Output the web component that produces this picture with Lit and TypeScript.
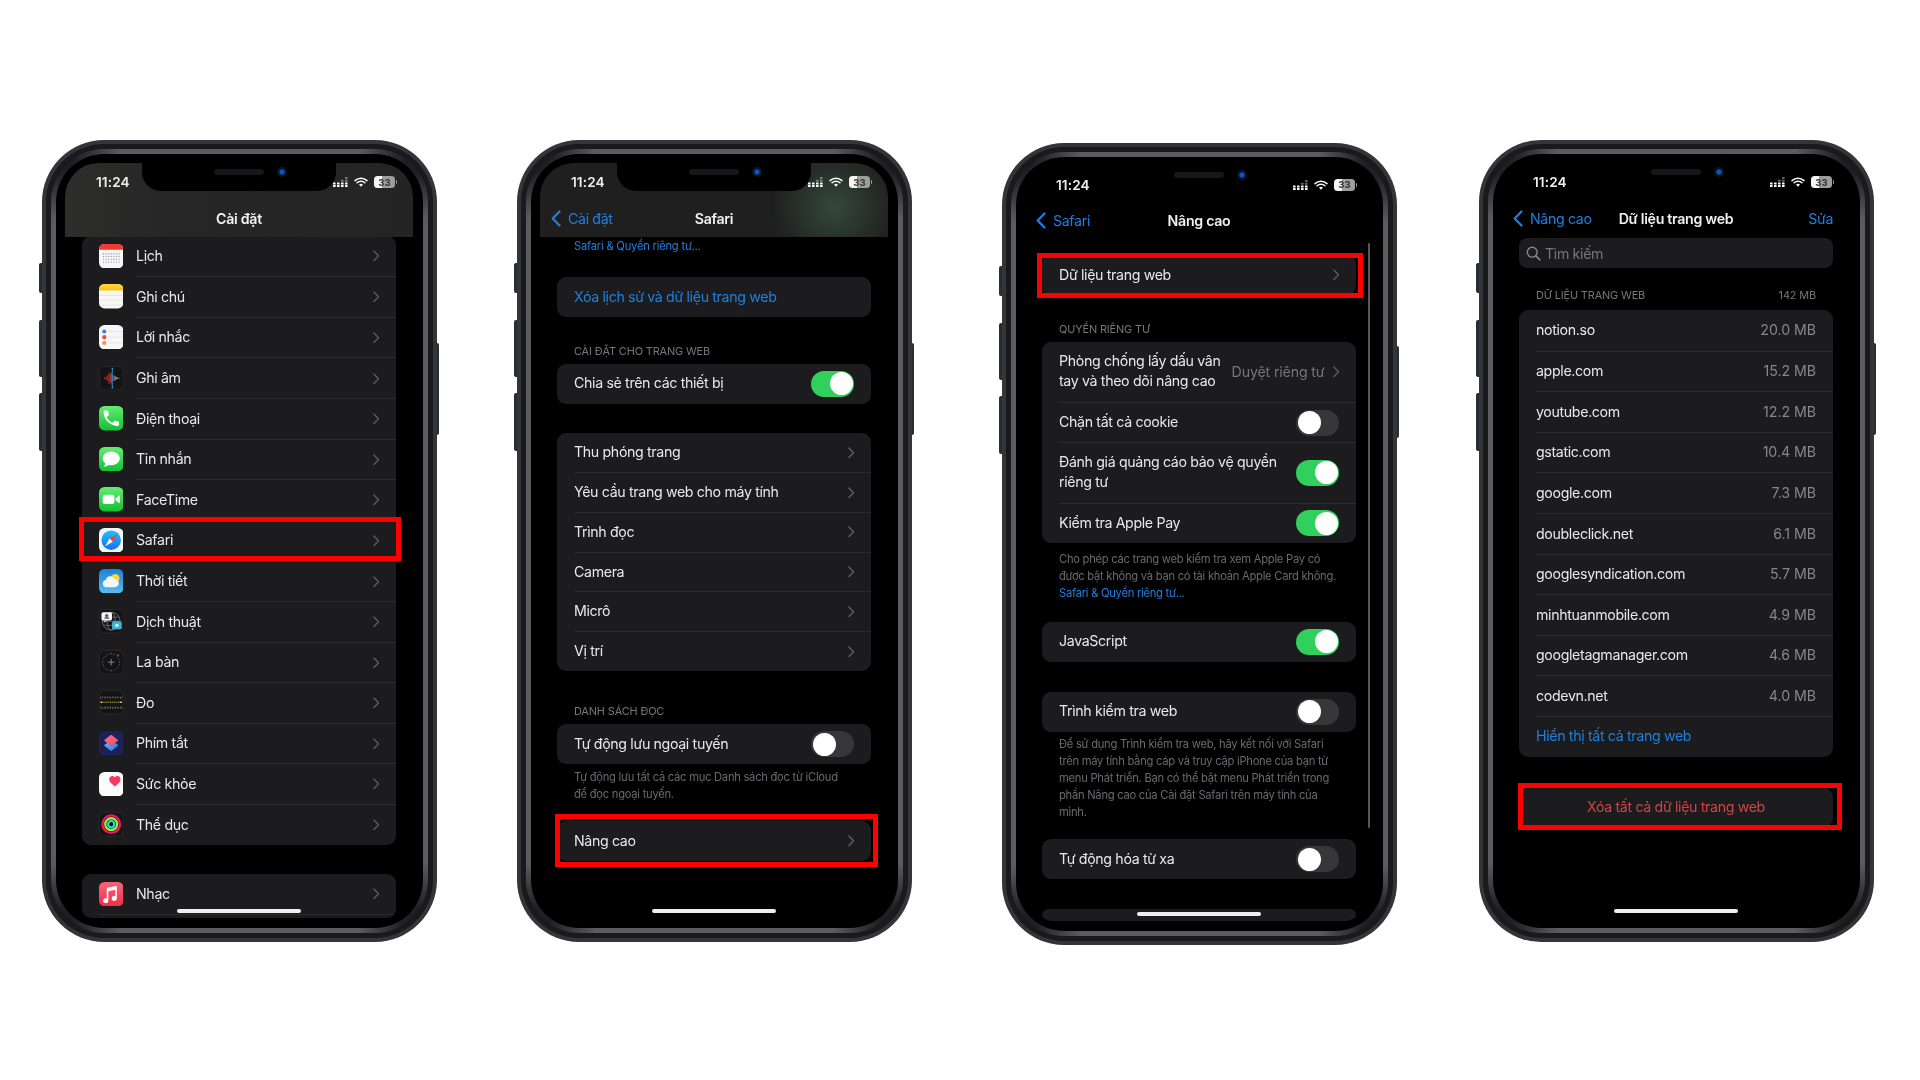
import { LitElement, html, css, svg } from "lit";
import { customElement } from "lit/decorators.js";

const chevron = html`<svg class="chev" viewBox="0 0 7 12"><path d="M1 1l5 5-5 5" fill="none" stroke="#5e5e62" stroke-width="1.5" stroke-linecap="round" stroke-linejoin="round"/></svg>`;
const backChev = html`<svg class="back" viewBox="0 0 10 17"><path d="M8.5 1.5L1.7 8.5l6.8 7" fill="none" stroke="#1f7fe0" stroke-width="2.3" stroke-linecap="round" stroke-linejoin="round"/></svg>`;

const ic = (body: unknown) => html`<svg class="ic" viewBox="0 0 30 30">${body}</svg>`;
const tile = (fill: string) => svg`<rect width="30" height="30" rx="6.8" fill="${fill}"/>`;
const darkTile = svg`<rect x=".5" y=".5" width="29" height="29" rx="6.5" fill="#141416" stroke="#2c2c2e"/>`;
const grad = (id: string, a: string, b: string) => svg`<defs><linearGradient id="${id}" x1="0" y1="0" x2="0" y2="1"><stop offset="0" stop-color="${a}"/><stop offset="1" stop-color="${b}"/></linearGradient></defs>`;

const calDots = [];
for (let r = 0; r < 4; r++) for (let c = 0; c < 7; c++) calDots.push(svg`<circle cx="${5.5 + c * 3.2}" cy="${12 + r * 3.4}" r=".8" fill="${r === 2 && c === 4 ? "#f33" : "#9a9a9a"}"/>`);
const wave = [[7,2],[9,4],[11,8],[12.5,14],[14,10],[15.5,16],[17,6]];
const wave2 = [[18.5,7],[20,5],[21.5,3],[23,2],[25,1]];
const compassTicks = [];
for (let i = 0; i < 24; i++) { const a = (i * Math.PI) / 12; compassTicks.push(svg`<circle cx="${15 + 10.5 * Math.cos(a)}" cy="${15 + 10.5 * Math.sin(a)}" r=".6" fill="${i % 6 === 0 ? "#ddd" : "#888"}"/>`); }
const rulerTop = [], rulerBot = [];
for (let i = 0; i < 14; i++) { rulerTop.push(svg`<rect x="${2 + i * 2}" y="8" width=".7" height="${i % 3 === 0 ? 3 : 2}" fill="#8a8a80"/>`); rulerBot.push(svg`<rect x="${2 + i * 2}" y="${i % 3 === 0 ? 20 : 21}" width=".7" height="${i % 3 === 0 ? 3 : 2}" fill="#9a9a90"/>`); }

const icons: Record<string, unknown> = {
  cal: ic(svg`${tile("#f6f6f6")}<path d="M0 7V6.8A6.8 6.8 0 0 1 6.8 0h16.4A6.8 6.8 0 0 1 30 6.8V7z" fill="#f23b30"/>${calDots}`),
  notes: ic(svg`${grad("ng", "#ffd93b", "#fbbf10")}${tile("#f7f7f5")}<path d="M0 8V6.8A6.8 6.8 0 0 1 6.8 0h16.4A6.8 6.8 0 0 1 30 6.8V8z" fill="url(#ng)"/><path d="M0 14h30M0 20h30M0 26h30" stroke="#dcdcd8" stroke-width=".8"/>`),
  rem: ic(svg`${tile("#f7f7f7")}<circle cx="6.5" cy="8" r="2.6" fill="#2e86f0"/><circle cx="6.5" cy="15" r="2.6" fill="#f0483e"/><circle cx="6.5" cy="22" r="2.6" fill="#f79a2c"/><path d="M12 8h18M12 15h18M12 22h18" stroke="#dedede" stroke-width=".9"/>`),
  voice: ic(svg`${darkTile}${wave.map(([x, h]) => svg`<rect x="${x - 0.6}" y="${15 - h / 2}" width="1.2" height="${h}" fill="#c2352f"/>`)}${wave2.map(([x, h]) => svg`<rect x="${x - 0.5}" y="${15 - h / 2}" width="1" height="${h}" fill="#aaa"/>`)}<path d="M16.5 3v24" stroke="#2b8fd0" stroke-width="1"/><circle cx="16.5" cy="3.5" r="1.2" fill="#2b8fd0"/><circle cx="16.5" cy="26.5" r="1.2" fill="#2b8fd0"/>`),
  phone: ic(svg`${grad("pg", "#62ee72", "#13bf35")}${tile("url(#pg)")}<path transform="translate(2.5 2.5) scale(1.05)" fill="#fff" d="M6.62 10.79c1.44 2.83 3.76 5.14 6.59 6.59l2.2-2.2c.27-.27.67-.36 1.02-.24 1.12.37 2.33.57 3.57.57.55 0 1 .45 1 1V20c0 .55-.45 1-1 1-9.39 0-17-7.61-17-17 0-.55.45-1 1-1h3.5c.55 0 1 .45 1 1 0 1.25.2 2.45.57 3.57.11.35.03.74-.25 1.02l-2.2 2.2z"/>`),
  msg: ic(svg`${grad("mg", "#62ee72", "#13bf35")}${tile("url(#mg)")}<ellipse cx="15" cy="14" rx="10.5" ry="8.6" fill="#fff"/><path d="M8 19c0 2.5-1 4-2.6 5 3 .2 5.4-.8 7-2.6z" fill="#fff"/>`),
  ft: ic(svg`${grad("fg", "#62ee72", "#13bf35")}${tile("url(#fg)")}<rect x="4.5" y="9.5" width="14.5" height="11.5" rx="3" fill="#fff"/><path d="M20.5 14l4.3-3.4c.5-.4 1-.1 1 .5v8.2c0 .6-.5.9-1 .5l-4.3-3.4z" fill="#fff"/>`),
  safari: ic(svg`<defs><linearGradient id="sg" x1="0" y1="0" x2="0" y2="1"><stop offset="0" stop-color="#1cc4f8"/><stop offset="1" stop-color="#1b6ef0"/></linearGradient></defs>${tile("#f4f5f6")}<circle cx="15" cy="15" r="12" fill="url(#sg)"/><path d="M22.5 7.5L13 13l4 4z" fill="#f4433c"/><path d="M7.5 22.5L13 13l4 4z" fill="#fff"/>`),
  weather: ic(svg`${grad("wg", "#1d7fd6", "#5bbcf2")}${tile("url(#wg)")}<circle cx="20" cy="11.5" r="5.2" fill="#fcd23a"/><path d="M9 22.5a4.6 4.6 0 0 1-.6-9.1 5.7 5.7 0 0 1 10.8-1 4.9 4.9 0 0 1 2.6 9.2q-1 .9-2.5.9z" fill="#f4f6f8"/>`),
  trans: ic(svg`${darkTile}<circle cx="15" cy="15" r="11" fill="none" stroke="#7b8a90" stroke-width=".9"/><ellipse cx="15" cy="15" rx="5" ry="11" fill="none" stroke="#7b8a90" stroke-width=".9"/><path d="M4 15h22M5.5 10h19M5.5 20h19" stroke="#7b8a90" stroke-width=".8"/><rect x="3" y="4" width="13" height="10" rx="2" fill="#f4f4f4"/><path d="M7 14l-1 3 4-3z" fill="#f4f4f4"/><circle cx="9.5" cy="8" r="2" fill="#555"/><rect x="6.5" y="10" width="6" height="2" rx="1" fill="#555"/><rect x="16" y="15" width="12" height="10" rx="2" fill="#3fb4cc"/><circle cx="22" cy="20" r="2" fill="#e8f8fb"/>`),
  compass: ic(svg`${darkTile}${compassTicks}<path d="M15 11v8M11 15h8" stroke="#999" stroke-width="1"/><circle cx="23.5" cy="6.5" r="1.2" fill="#e0352c"/>`),
  measure: ic(svg`${darkTile}${rulerTop}${rulerBot}<path d="M2 15h26" stroke="#caa92a" stroke-width="1.2" stroke-dasharray="1.6 .7"/><circle cx="3" cy="15" r="1" fill="#fff"/><circle cx="27" cy="15" r="1" fill="#fff"/>`),
  short: ic(svg`<defs><linearGradient id="s1" x1="0" y1="0" x2="1" y2="1"><stop offset="0" stop-color="#f76ba6"/><stop offset="1" stop-color="#f04a4a"/></linearGradient><linearGradient id="s2" x1="0" y1="0" x2="1" y2="1"><stop offset="0" stop-color="#5bd0e8"/><stop offset="1" stop-color="#3a66e0"/></linearGradient></defs>${tile("#1c2158")}<path d="M15 11.5l8 5.5c.6.4.6 1.1 0 1.5l-7 5.5c-.6.4-1.4.4-2 0l-7-5.5c-.6-.4-.6-1.1 0-1.5z" fill="url(#s2)"/><path d="M14 5.3c.6-.4 1.4-.4 2 0l7 5.5c.6.4.6 1.1 0 1.5l-7 5.5c-.6.4-1.4.4-2 0l-7-5.5c-.6-.4-.6-1.1 0-1.5z" fill="url(#s1)"/>`),
  health: ic(svg`${tile("#fbfbfb")}<path d="M19.5 17.5c-.3 0-.6-.1-.8-.3-4-3.2-6.2-5.3-6.2-8.2 0-2.3 1.7-4 3.8-4 1.3 0 2.5.7 3.2 1.8.7-1.1 1.9-1.8 3.2-1.8 2.1 0 3.8 1.7 3.8 4 0 2.9-2.2 5-6.2 8.2-.2.2-.4.3-.8.3z" fill="#f7395e"/>`),
  fit: ic(svg`${darkTile}<circle cx="15" cy="15" r="10.8" fill="none" stroke="#f0195e" stroke-width="2.8"/><circle cx="15" cy="15" r="7.3" fill="none" stroke="#9bf03c" stroke-width="2.8"/><circle cx="15" cy="15" r="3.9" fill="none" stroke="#25e0d0" stroke-width="2.6"/>`),
  music: ic(svg`${grad("mu", "#fb6478", "#f12d48")}${tile("url(#mu)")}<path d="M22 5.6v14.6a3.2 3 0 1 1-2-2.8V9.6l-8.5 1.9V23a3.2 3 0 1 1-2-2.8V8.2c0-.5.3-.9.8-1l10.6-2.3c.6-.1 1.1.2 1.1.7z" fill="#fff"/>`),
};

const settings: [string, string][] = [
  ["cal", "Lịch"], ["notes", "Ghi chú"], ["rem", "Lời nhắc"], ["voice", "Ghi âm"], ["phone", "Điện thoại"],
  ["msg", "Tin nhắn"], ["ft", "FaceTime"], ["safari", "Safari"], ["weather", "Thời tiết"], ["trans", "Dịch thuật"],
  ["compass", "La bàn"], ["measure", "Đo"], ["short", "Phím tắt"], ["health", "Sức khỏe"], ["fit", "Thể dục"],
];
const sites: [string, string][] = [
  ["notion.so", "20.0 MB"], ["apple.com", "15.2 MB"], ["youtube.com", "12.2 MB"], ["gstatic.com", "10.4 MB"], ["google.com", "7.3 MB"],
  ["doubleclick.net", "6.1 MB"], ["googlesyndication.com", "5.7 MB"], ["minhtuanmobile.com", "4.9 MB"], ["googletagmanager.com", "4.6 MB"], ["codevn.net", "4.0 MB"],
];

const toggle = (on: boolean) => html`<span class="tg ${on ? "on" : ""}"><i></i></span>`;

const sigCols = [2, 2, 3, 4];
const statusBar = html`<div class="status">
  <span class="time">11:24</span>
  <svg class="sig" viewBox="0 0 15 10">
    ${sigCols.map((h, c) => [0, 1, 2, 3].map((r) => svg`<rect x="${c * 4}" y="${r * 2.7}" width="2.6" height="2.1" rx=".5" fill="#fff" opacity="${3 - r < h ? (r < 2 ? 0.38 : 1) : 0}"/>`))}
  </svg>
  <svg class="wifi" viewBox="0 0 14 10">
    <path d="M1 3.6a8.6 8.6 0 0 1 12 0M3.1 5.8a5.6 5.6 0 0 1 7.8 0" fill="none" stroke="#fff" stroke-width="1.5" stroke-linecap="round"/>
    <path d="M5 7.6a2.9 2.9 0 0 1 4 0L7 9.7z" fill="#fff"/>
  </svg>
  <span class="batt"><b>33</b></span><span class="cap"></span>
</div>`;

const nav = (back: string, title: string, opts: { cls?: string; action?: string } = {}) => html`<div class="nav ${opts.cls ?? ""}">
  ${statusBar}
  <div class="navrow">
    <span class="backwrap">${back ? html`${backChev}<span class="blue">${back}</span>` : ""}</span>
    <span class="title">${title}</span>
    <span class="action blue">${opts.action ?? ""}</span>
  </div>
</div>`;

const row = (label: unknown, extra: unknown = chevron, cls = "") => html`<div class="row ${cls}"><div class="inner"><span class="lbl">${label}</span>${extra}</div></div>`;

const phone = (cls: string, content: unknown) => html`<div class="phone ${cls}">
  <span class="btn b1"></span><span class="btn b2"></span><span class="btn b3"></span><span class="btn b4"></span>
  <div class="ring1"><div class="ring2"><div class="bezel"><div class="screen">
    ${content}
    <div class="notch"><span class="spk"></span><span class="cam"></span></div>
    <div class="home"></div>
  </div></div></div></div>
</div>`;

@customElement("app-root")
export class AppRoot extends LitElement {
  static styles = css`
    :host { display: block; width: 1920px; height: 1080px; background: #fff; overflow: hidden;
      font-family: "Inter", "Noto Sans", sans-serif; }
    .stage { display: flex; align-items: flex-start; padding: 140px 0 0 42px; }
    .phone { position: relative; width: 395px; height: 802px; flex: none; box-sizing: border-box; padding: 4px;
      background: #34353a; border-radius: 62px; filter: blur(.35px); }
    .p2 { margin-left: 80px; }
    .p3 { margin-left: 90px; margin-top: 3px; }
    .p4 { margin-left: 82px; }
    .btn { position: absolute; background: #2b2c30; }
    .b1 { left: -3px; top: 123px; width: 3px; height: 30px; border-radius: 2px 0 0 2px; }
    .b2 { left: -3px; top: 180px; width: 3px; height: 57px; border-radius: 2px 0 0 2px; }
    .b3 { left: -3px; top: 253px; width: 3px; height: 58px; border-radius: 2px 0 0 2px; }
    .b4 { right: -2px; top: 203px; width: 2px; height: 92px; border-radius: 0 2px 2px 0; }
    .ring1 { height: 100%; box-sizing: border-box; padding: 5px; background: #1a1a1d; border-radius: 58px; }
    .ring2 { height: 100%; box-sizing: border-box; padding: 5px; border-radius: 53px;
      background:
        radial-gradient(circle 70px at 0 0, #1e1e20 35%, transparent 100%),
        radial-gradient(circle 70px at 100% 0, #1e1e20 35%, transparent 100%),
        radial-gradient(circle 70px at 0 100%, #1e1e20 35%, transparent 100%),
        radial-gradient(circle 70px at 100% 100%, #1e1e20 35%, transparent 100%),
        #5c5c5e; }
    .bezel { height: 100%; box-sizing: border-box; padding: 9px; background: #000; border-radius: 48px; }
    .screen { position: relative; width: 348px; height: 756px; background: #000; border-radius: 34px; overflow: hidden;
      color: #e8e8ea; font-size: 14.2px; letter-spacing: -.35px; display: flex; flex-direction: column; }
    .notch { position: absolute; top: 0; left: 77px; width: 194px; height: 28px; background: #000;
      border-radius: 0 0 19px 19px; z-index: 5; }
    .spk { position: absolute; left: 72px; top: 6px; width: 50px; height: 6px; border-radius: 3px; background: #17171a; }
    .cam { position: absolute; left: 135px; top: 4px; width: 10px; height: 10px; border-radius: 50%;
      background: radial-gradient(circle, #0a55c8 0 28%, #0c1424 45% 100%); }
    .home { position: absolute; bottom: 6px; left: 112px; width: 124px; height: 4.5px; border-radius: 3px; background: #efefef; z-index: 6; }

    .nav { height: 74px; flex: none; position: relative; z-index: 3; display: flex; flex-direction: column; }
    .nav.p1bg { background: linear-gradient(90deg, #2d2d2c, #262626 30%, #242424); }
    .nav.p2bg { background: radial-gradient(ellipse 62px 60px at 294px 44px, #35483a, rgba(38,50,42,0) 100%), #1f1f20; }
    .status { height: 38px; flex: none; display: flex; align-items: center; padding-left: 31px; box-sizing: border-box; color: #eee; }
    .p3 .status { height: 37px; }
    .time { font-weight: 600; font-size: 13.6px; width: 237px; flex: none; letter-spacing: .1px; }
    .sig { width: 15px; height: 10px; flex: none; }
    .wifi { width: 14px; height: 10px; margin-left: 6px; flex: none; }
    .batt { margin-left: 6px; width: 21px; height: 12px; border-radius: 3.5px; flex: none;
      background: linear-gradient(90deg, #f4f4f4 0 40%, #9d9d9d 40%); display: flex; align-items: center; justify-content: center; }
    .batt b { font: 700 9.5px "Inter", sans-serif; letter-spacing: 0; color: #333; }
    .cap { width: 1.5px; height: 4px; background: #999; border-radius: 0 1px 1px 0; margin-left: .5px; flex: none; }
    .navrow { height: 36px; flex: none; display: grid; grid-template-columns: 1fr auto 1fr; align-items: center; padding: 0 17px; box-sizing: border-box; margin-top: -1px; }
    .backwrap { display: flex; align-items: center; margin-left: -6px; }
    .back { width: 10px; height: 17px; margin-right: 7px; flex: none; }
    .blue { color: #1f7fe0; }
    .title { font-weight: 600; color: #f0f0f0; letter-spacing: -.3px; }
    .action { text-align: right; }

    .body { display: flex; flex-direction: column; padding: 0 17px; }
    .card { background: #1c1c1e; border-radius: 9px; position: relative; }
    .row { position: relative; height: 39.7px; display: flex; align-items: stretch; box-sizing: border-box; }
    .card.tall .row { height: 40.6px; }
    .row .ic { width: 24.4px; height: 24.4px; flex: none; align-self: center; margin-left: 17px; margin-right: -4.4px; }
    .inner { flex: 1; min-width: 0; margin-left: 17px; padding-right: 17px; display: flex; align-items: center; justify-content: space-between; box-sizing: border-box; }
    .lbl { margin-bottom: 1.5px; }
    .row + .row .inner { border-top: 1px solid #2b2b2d; }
    .one .row, .mix .row { height: 40px; }
    .mix .row.two { height: 60.5px; }
    .row.two .lbl { line-height: 20px; }
    .chev { width: 6.5px; height: 11.5px; flex: none; }
    .val { color: #76767a; display: flex; align-items: center; gap: 8px; white-space: nowrap; letter-spacing: -.15px; margin-bottom: 1.5px; }
    .val .chev { margin-top: 1.5px; }
    .size { color: #87878b; letter-spacing: -.05px; margin-bottom: 1.5px; }
    .tg { width: 43px; height: 26px; border-radius: 13px; background: #37373b; flex: none; position: relative; box-sizing: border-box; padding: 1.5px; display: flex; }
    .tg.on { background: #31cf5b; justify-content: flex-end; }
    .tg i { width: 23px; height: 23px; border-radius: 50%; background: #fff; display: block; }
    .hdr { margin-top: 27px; padding: 0 17px 5.5px; font-size: 10.9px; line-height: 14px; letter-spacing: -.12px; color: #77777b; display: flex; justify-content: space-between; }
    .foot { padding: 0 17px; font-size: 11.2px; line-height: 17px; letter-spacing: -.26px; color: #6a6a6e; white-space: nowrap; }
    .link { font-size: 11.2px; line-height: 17px; letter-spacing: -.22px; }
    .hl { position: absolute; border: 5px solid #f00; box-sizing: border-box; z-index: 2; pointer-events: none; }
    .hl1 { left: -3px; right: -5px; top: -3.2px; bottom: -.2px; }
    .hl2 { left: -2px; right: -7px; top: -7px; bottom: -6px; }
    .hl3 { left: -5px; right: -7px; top: -2px; bottom: -3px; }
    .hl4 { left: -1px; right: -9px; top: -5px; bottom: -3px; }

    .s1 { margin-top: -1.3px; }
    .s1b { margin-top: 29px; height: 44px; overflow: hidden; }
    .s2a { margin: 0 0 0 34px; padding-top: 1px; }
    .c2-1 { margin-top: 22px; } .c2-3 { margin-top: 29px; } .h2-3 { margin-top: 33px; padding-bottom: 6.5px; }
    .f2 { margin-top: 5px; } .c2-5 { margin-top: 18px; }
    .c3-1 { margin-top: 15px; } .f3-1 { margin-top: 8px; } .c3-3 { margin-top: 20px; } .c3-4 { margin-top: 30px; }
    .f3-2 { margin-top: 4px; } .c3-5 { margin-top: 18.5px; } .c3-6 { margin-top: 30px; height: 12px; }
    .scroll { position: absolute; right: 3px; top: 77px; width: 2.5px; height: 585px; border-radius: 2px; background: #58585c; z-index: 2; }
    .search { margin-top: 1px; height: 30px; border-radius: 8px; background: #1c1c1e; display: flex; align-items: center; padding-left: 7px; color: #77777b; gap: 4px; }
    .search svg { width: 15px; height: 15px; flex: none; }
    .h4 { margin-top: 20px; padding-bottom: 8px; }
    .c4-2 { margin-top: 31px; height: 39px; box-sizing: border-box; padding-bottom: 2px; display: flex; align-items: center; justify-content: center; color: #cf4545; }
  `;

  render() {
    return html`<div class="stage">
      ${phone("p1", html`
        ${nav("", "Cài đặt", { cls: "p1bg" })}
        <div class="body">
          <div class="card tall s1">
            ${settings.map(([k, t]) => html`<div class="row">${icons[k]}<div class="inner"><span class="lbl">${t}</span>${chevron}</div>${k === "safari" ? html`<div class="hl hl1"></div>` : ""}</div>`)}
          </div>
          <div class="card tall s1b">
            <div class="row">${icons.music}<div class="inner"><span class="lbl">Nhạc</span>${chevron}</div></div>
            <div class="row"><div class="inner"></div></div>
          </div>
        </div>`)}
      ${phone("p2", html`
        ${nav("Cài đặt", "Safari", { cls: "p2bg" })}
        <div class="link blue s2a">Safari & Quyền riêng tư...</div>
        <div class="body">
          <div class="card one c2-1"><div class="row"><div class="inner blue"><span class="lbl">Xóa lịch sử và dữ liệu trang web</span></div></div></div>
          <div class="hdr">CÀI ĐẶT CHO TRANG WEB</div>
          <div class="card one">${row("Chia sẻ trên các thiết bị", toggle(true))}</div>
          <div class="card c2-3">
            ${["Thu phóng trang", "Yêu cầu trang web cho máy tính", "Trình đọc", "Camera", "Micrô", "Vị trí"].map((t) => row(t))}
          </div>
          <div class="hdr h2-3">DANH SÁCH ĐỌC</div>
          <div class="card one">${row("Tự động lưu ngoại tuyến", toggle(false))}</div>
          <div class="foot f2">Tự động lưu tất cả các mục Danh sách đọc từ iCloud<br />để đọc ngoại tuyến.</div>
          <div class="card one c2-5">${row("Nâng cao")}<div class="hl hl2"></div></div>
        </div>`)}
      ${phone("p3", html`
        ${nav("Safari", "Nâng cao")}
        <div class="scroll"></div>
        <div class="body">
          <div class="card one c3-1">${row("Dữ liệu trang web")}<div class="hl hl3"></div></div>
          <div class="hdr">QUYỀN RIÊNG TƯ</div>
          <div class="card mix">
            ${row(html`Phòng chống lấy dấu vân<br />tay và theo dõi nâng cao`, html`<span class="val">Duyệt riêng tư ${chevron}</span>`, "two")}
            ${row("Chặn tất cả cookie", toggle(false))}
            ${row(html`Đánh giá quảng cáo bảo vệ quyền<br />riêng tư`, toggle(true), "two")}
            ${row("Kiểm tra Apple Pay", toggle(true))}
          </div>
          <div class="foot f3-1">Cho phép các trang web kiểm tra xem Apple Pay có<br />được bật không và bạn có tài khoản Apple Card không.<br /><span class="blue">Safari & Quyền riêng tư...</span></div>
          <div class="card one c3-3">${row("JavaScript", toggle(true))}</div>
          <div class="card one c3-4">${row("Trình kiểm tra web", toggle(false))}</div>
          <div class="foot f3-2">Để sử dụng Trình kiểm tra web, hãy kết nối với Safari<br />trên máy tính bằng cáp và truy cập iPhone của bạn từ<br />menu Phát triển. Bạn có thể bật menu Phát triển trong<br />phần Nâng cao của Cài đặt Safari trên máy tính của<br />mình.</div>
          <div class="card one c3-5">${row("Tự động hóa từ xa", toggle(false))}</div>
          <div class="card c3-6"></div>
        </div>`)}
      ${phone("p4", html`
        ${nav("Nâng cao", "Dữ liệu trang web", { action: "Sửa" })}
        <div class="body">
          <div class="search">
            <svg viewBox="0 0 15 15"><circle cx="6.2" cy="6.2" r="4.9" fill="none" stroke="#88888c" stroke-width="1.4"/><path d="M9.9 9.9l4 4" stroke="#88888c" stroke-width="1.6" stroke-linecap="round"/></svg>
            <span>Tìm kiếm</span>
          </div>
          <div class="hdr h4"><span>DỮ LIỆU TRANG WEB</span><span>142 MB</span></div>
          <div class="card tall">
            ${sites.map(([s, v]) => row(s, html`<span class="size">${v}</span>`))}
            <div class="row"><div class="inner"><span class="lbl blue">Hiển thị tất cả trang web</span></div></div>
          </div>
          <div class="card c4-2">Xóa tất cả dữ liệu trang web<div class="hl hl4"></div></div>
        </div>`)}
    </div>`;
  }
}
